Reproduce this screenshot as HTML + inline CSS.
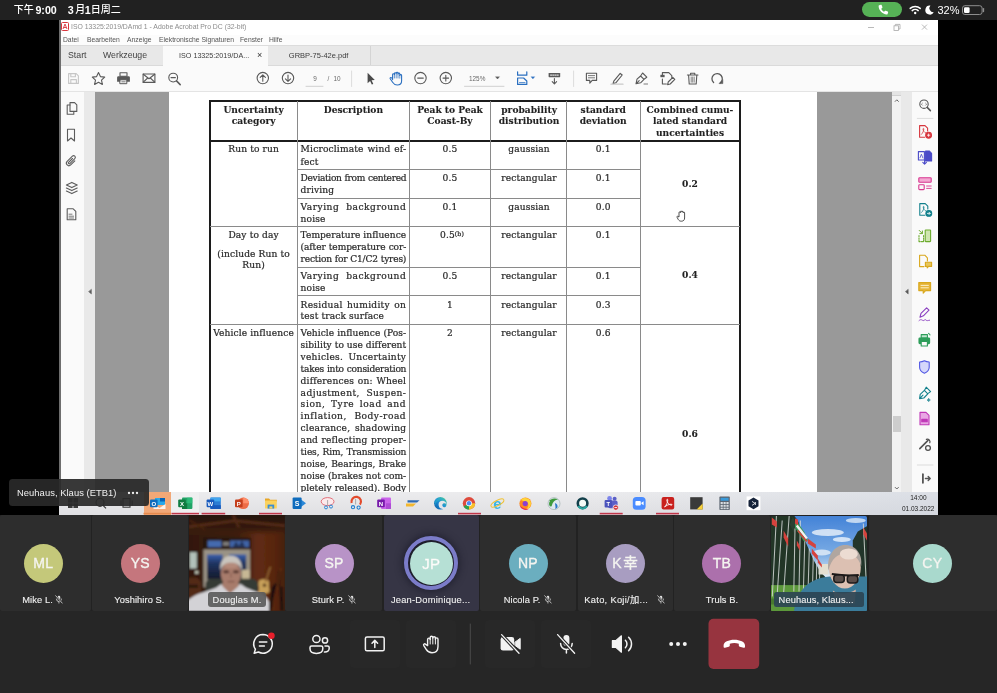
<!DOCTYPE html>
<html><head><meta charset="utf-8">
<style>
*{box-sizing:border-box;margin:0;padding:0}
html,body{width:997px;height:693px;overflow:hidden;background:#000}
body{position:relative;-webkit-font-smoothing:antialiased;font-family:"Liberation Sans","Noto Sans CJK SC",sans-serif;color:#fff}
.abs{position:absolute}
#status,#share,#bar,.gs{will-change:transform}
#status{left:0;top:0;width:997px;height:20px;background:#212121}
#status .t{position:absolute;top:3px;font-size:10px;line-height:14px;font-weight:500;color:#fff;white-space:nowrap}
#status .t b{font-weight:bold;font-size:10.700px}
#share{left:59px;top:20px;width:879px;height:495px;background:#fafafa;overflow:hidden;color:#444}
#share .abs{position:absolute}
#status,#share,#bar,.gs{will-change:transform}

.tt{font-size:6.86px;line-height:10px;color:#8c8c8c;white-space:nowrap}
.mn{top:15px;font-size:6.75px;line-height:10px;color:#555;white-space:nowrap}
.tb{top:29px;font-size:8.75px;line-height:12px;color:#444;white-space:nowrap}
.tb2{top:30px;font-size:7.5px;line-height:11px;color:#3c3c3c;white-space:nowrap}

.pg{top:52.500px;font-size:6.400px;line-height:11px;color:#6a6a6a;white-space:nowrap}
.dl{font-family:"DejaVu Serif","Liberation Serif",serif;font-size:9.1px;line-height:12px;height:12px;color:#2b2b2b;white-space:nowrap;overflow:visible;letter-spacing:.12px;-webkit-text-stroke:.22px #2b2b2b}
.dl.b{font-weight:bold;color:#222;letter-spacing:0;-webkit-text-stroke:.1px #222}
#strip{will-change:transform;left:0;top:515px;width:997px;height:96px;background:#222}
.tile{position:absolute;top:0;height:96px;background:#2d2d2d;border-radius:2px}
.av{position:absolute;top:28.500px;width:39px;height:39px;border-radius:50%;text-align:center;font-size:14px;line-height:39px;color:#f4f4f0;font-weight:normal;letter-spacing:.2px;-webkit-text-stroke:.35px #f4f4f0}
.nm{position:absolute;top:78px;height:14px;font-size:9.300px;line-height:14px;color:#f0f0f0;white-space:nowrap;letter-spacing:.08px;-webkit-text-stroke:.12px #f0f0f0}
#bar{left:0;top:611px;width:997px;height:82px;background:#262626}
</style></head><body>
<div id="status" class="abs">
<span class="t" style="left:13.800px">下午</span><span class="t" style="left:35.400px"><b>9:00</b></span>
<span class="t" style="left:67.800px"><b>3</b></span><span class="t" style="left:75.200px">月</span><span class="t" style="left:84.700px"><b>1</b></span><span class="t" style="left:90.800px">日周二</span>
<div style="position:absolute;left:862px;top:2.200px;width:40.400px;height:14.800px;border-radius:7.400px;background:#56b256"></div>
<svg style="position:absolute;left:860px;top:0" width="137" height="20" viewBox="860 0 137 20">
<path d="M879.200 5.200l1.600-.5c.4-.1.700.1.800.4l.8 2c.1.300 0 .6-.2.800l-1 .8c.6 1.300 1.600 2.400 2.800 3.100l.9-.9c.2-.2.500-.3.800-.2l2 .9c.3.100.5.500.4.800l-.5 1.500c-.1.400-.5.600-.9.600-4.400-.300-7.900-3.900-8.100-8.400 0-.400.200-.800.600-.900z" fill="#fff"/>
<g fill="none" stroke="#fff" stroke-width="1.500" stroke-linecap="round"><path d="M910.200 8.400a7.300 7.300 0 0 1 10 0M912.200 10.600a4.400 4.400 0 0 1 6 0"/></g><circle cx="915.200" cy="13" r="1.200" fill="#fff"/>
<path d="M930.400 5.600a4.500 4.500 0 1 0 3.400 6.600 4 4 0 0 1-3.400-6.600z" fill="#fff"/>
<rect x="962.500" y="5.700" width="19.600" height="8.800" rx="2.400" fill="none" stroke="#8e8e8e" stroke-width="1"/><rect x="964" y="7.200" width="5.600" height="5.800" rx="1.200" fill="#fff"/><path d="M983.500 8.600v3" stroke="#8e8e8e" stroke-width="1.300" stroke-linecap="round"/>
</svg>
<span class="t" style="left:937.500px;font-weight:normal;font-size:11px">32%</span>

</div>
<div id="share" class="abs">

<!-- Acrobat title/menu/tabs/toolbar -->
<div class="abs" style="left:0;top:0;width:879px;height:15px;background:#fff"></div>
<svg class="abs" style="left:2px;top:2px" width="8" height="9" viewBox="0 0 8 9"><rect x="0.5" y="0.5" width="7" height="8" rx="1" fill="#fff" stroke="#d9363e" stroke-width="1"/><path d="M2 7 L4 2 L6 7 M2.6 5.5 L5.4 5.5" stroke="#d9363e" stroke-width="0.9" fill="none"/></svg>
<span class="abs tt" style="left:12px;top:2px">ISO 13325:2019/DAmd 1 - Adobe Acrobat Pro DC (32-bit)</span>
<div class="abs" style="left:0;top:15px;width:879px;height:11px;background:#fcfcfc"></div>
<span class="abs mn" style="left:4px">Datei</span>
<span class="abs mn" style="left:28px">Bearbeiten</span>
<span class="abs mn" style="left:68px">Anzeige</span>
<span class="abs mn" style="left:100px">Elektronische Signaturen</span>
<span class="abs mn" style="left:181px">Fenster</span>
<span class="abs mn" style="left:210px">Hilfe</span>
<div class="abs" style="left:0;top:25px;width:879px;height:21px;background:#e8e8e8;border-top:1px solid #dcdcdc;border-bottom:1px solid #dadada"></div>
<div class="abs" style="left:104px;top:26px;width:105px;height:20px;background:#fafafa"></div>
<div class="abs" style="left:311px;top:26px;width:1px;height:19px;background:#d4d4d4"></div>
<span class="abs tb" style="left:9px">Start</span>
<span class="abs tb" style="left:44px">Werkzeuge</span>
<span class="abs tb2" style="left:120px;font-size:7.2px">ISO 13325:2019/DA...</span>
<span class="abs tb2" style="left:198px;font-size:9px;color:#333">×</span>
<span class="abs tb2" style="left:229.800px">GRBP-75-42e.pdf</span>
<div class="abs" style="left:0;top:46px;width:879px;height:26px;background:#fafafa;border-bottom:1px solid #e4e4e4"></div>

<!-- toolbar icons (page coords via viewBox) -->
<svg class="abs" style="left:0;top:46px" width="879" height="26" viewBox="59 66 879 26" fill="none" stroke="#595959" stroke-width="1.1" stroke-linecap="round" stroke-linejoin="round">
<!-- save (disabled) -->
<g stroke="#c6c6c6"><path d="M68.6 73.6h7.6l2.2 2.2v7.6h-9.8z"/><path d="M70.8 73.8v3h4.6v-3M70.8 83.2v-3.6h5.6v3.6"/></g>
<!-- star -->
<path d="M98.5 72.6l1.9 4 4.3.5-3.2 3 .9 4.3-3.9-2.2-3.9 2.2.9-4.3-3.2-3 4.3-.5z"/>
<!-- print -->
<rect x="120" y="72.800" width="7" height="3.400" fill="#fafafa" stroke="#595959" stroke-width="1.100"/><path d="M118.400 76.200h10.200a1.300 1.300 0 0 1 1.300 1.300v4.300h-12.800v-4.300a1.300 1.300 0 0 1 1.300-1.300z" fill="#595959" stroke="none"/><rect x="120.200" y="79.800" width="6.600" height="3.900" fill="#fafafa" stroke="#595959" stroke-width="1"/><path d="M121.800 81.800h3.400" stroke-width=".8"/>
<!-- mail -->
<rect x="143.1" y="74" width="11.8" height="8.4"/><path d="M143.3 74.2l5.7 4.6 5.7-4.6M143.3 82.2l4.4-4.2M154.7 82.2l-4.4-4.2"/>
<!-- zoom-out search -->
<circle cx="173.2" cy="77.6" r="4.4"/><path d="M176.5 80.9l3.7 3.7" stroke-width="1.5"/><path d="M171 77.6h4.4"/>
<!-- up / down -->
<circle cx="262.8" cy="78.1" r="5.7"/><path d="M262.8 81.2v-6.2M260.2 77.4l2.6-2.6 2.6 2.6"/>
<circle cx="288" cy="78.1" r="5.7"/><path d="M288 75v6.2M285.4 78.8l2.6 2.6 2.6-2.6"/>
<path d="M306 86.3h17M464.5 86.3h39.5" stroke="#d0d0d0" stroke-width="1"/>
<path d="M351.6 71v15.5M573.6 71v15.5" stroke="#dcdcdc" stroke-width="1"/>
<!-- arrow cursor -->
<path d="M367.6 72.8v10.4l2.5-2.3 1.7 3.7 1.5-.7-1.7-3.6 3.2-.2z" fill="#4a4a4a" stroke="none"/>
<!-- hand (blue) -->
<g stroke="#2a6fc0" stroke-width="1.1"><path d="M392.6 79.6v-5a.9.9 0 0 1 1.8 0v-1a.9.9 0 0 1 1.8 0v-.4a.9.9 0 0 1 1.8 0v.8a.9.9 0 0 1 1.8 0v1.400a.9.9 0 0 1 1.800 0v5.600c0 2.600-1.600 4-4.400 4-2.400 0-3.400-1-4.600-2.800l-2.400-3.400c-.5-.9.600-1.700 1.400-1l1 1z"/><path d="M394.400 74.500v3.500M396.200 73.600v4.400M398 73.800v4.200M399.800 75.200v3" stroke-width=".7"/></g>
<!-- minus / plus -->
<circle cx="420.500" cy="78.100" r="5.700"/><path d="M417.700 78.100h5.600"/>
<circle cx="445.800" cy="78.100" r="5.700"/><path d="M443 78.100h5.600M445.800 75.300v5.600"/>
<path d="M495.800 77l1.700 2 1.700-2z" fill="#595959" stroke="#595959" stroke-width=".5"/>
<!-- blue fit icon -->
<g stroke="#2a6fc0" stroke-width="1.200"><path d="M517.600 71.800v3.400h9.200v-3.400"/><path d="M517.600 84.400v-6.400h6l3.200 3v3.400z" /><path d="M519.500 82.600h5.500" stroke-width=".8"/></g>
<path d="M531.400 77l1.500 1.800 1.500-1.800z" fill="#2a6fc0" stroke="#2a6fc0" stroke-width=".5"/>
<!-- keyboard download -->
<rect x="548.600" y="73" width="11.600" height="4.200" rx=".6" fill="#595959" stroke="none"/><path d="M550.500 75.100h8" stroke="#fafafa" stroke-width="1" stroke-dasharray="1.200 1"/><path d="M554.400 78.600v5M552.200 81.600l2.200 2.400 2.200-2.400"/>
<!-- comment -->
<path d="M586.400 73.200h10.200v7.200h-4.400l-2.400 2.800v-2.800h-3.400z"/><path d="M588.400 75.600h6.200M588.400 77.800h6.200" stroke-width=".8"/>
<!-- highlighter -->
<path d="M613.800 81.200l6.400-7.800 2 1.600-6.400 7.800-2.800.8z"/><path d="M611 84.200h12" stroke="#c9c9c9" stroke-width="1.300"/>
<!-- sign pen -->
<path d="M636 83.800l1-4.600 3.600-3.200 3.400 3.400-3.400 3.400zM640.600 76l2-3 4.200 4.200-2.800 2M636.200 83.600l3-3"/><path d="M644 84h3.600" stroke-width=".8"/>
<!-- tag/edit pdf -->
<path d="M662.400 76v-3.400h6.400l3 3v2M662.400 79v5h4"/><rect x="660.400" y="74.800" width="4.200" height="2.400" fill="#595959" stroke="none"/><path d="M667.600 84.600l.6-2.600 4.600-4.600 2 2-4.600 4.600z"/>
<!-- trash -->
<path d="M687.400 75h10.600M690.600 74.800v-1.600h4.200v1.600M688.600 75.200l.6 8.800h7l.6-8.800"/><path d="M691.200 77v5.200M692.700 77v5.200M694.200 77v5.200" stroke-width=".7"/>
<!-- rotate -->
<path d="M713.600 82.600a5.200 5.200 0 1 1 6.600.4" stroke-width="1.300"/><path d="M722.800 80.200v3.400h-3.400z" fill="#595959" stroke-width=".6"/>
</svg>
<span class="abs pg" style="left:254.200px">9</span>
<span class="abs pg" style="left:268.600px">/</span><span class="abs pg" style="left:274.400px">10</span>
<span class="abs pg" style="left:410px">125%</span>
<!-- window controls -->
<svg class="abs" style="left:800px;top:0" width="79" height="15" viewBox="859 20 79 15" fill="none" stroke="#a8a8a8" stroke-width=".8"><path d="M868 27.500h6"/><rect x="894" y="25.800" width="4.600" height="4.600"/><path d="M895.400 25.600v-1.200h4.600v4.600h-1.200"/><path d="M922 24.600l5 5M927 24.600l-5 5"/></svg>

<div class="abs" style="left:36px;top:72px;width:797px;height:400px;background:#999"></div>
<div class="abs" style="left:110px;top:72px;width:648px;height:400px;background:#fff"></div>
<div class="abs" style="left:149.5px;top:80.0px;width:532.5px;height:2px;background:#1c1c1c"></div>
<div class="abs" style="left:149.5px;top:120.2px;width:532.5px;height:2px;background:#1c1c1c"></div>
<div class="abs" style="left:149.5px;top:80.0px;width:2px;height:392.0px;background:#1c1c1c"></div>
<div class="abs" style="left:680.2px;top:80.0px;width:2px;height:392.0px;background:#1c1c1c"></div>
<div class="abs" style="left:238.3px;top:81.0px;width:1px;height:391.0px;background:#8a8a8a"></div>
<div class="abs" style="left:349.6px;top:81.0px;width:1px;height:391.0px;background:#8a8a8a"></div>
<div class="abs" style="left:431.4px;top:81.0px;width:1px;height:391.0px;background:#8a8a8a"></div>
<div class="abs" style="left:507.1px;top:81.0px;width:1px;height:391.0px;background:#8a8a8a"></div>
<div class="abs" style="left:580.8px;top:81.0px;width:1px;height:391.0px;background:#8a8a8a"></div>
<div class="abs" style="left:238.3px;top:149.2px;width:342.7px;height:1px;background:#8a8a8a"></div>
<div class="abs" style="left:238.3px;top:177.8px;width:342.7px;height:1px;background:#8a8a8a"></div>
<div class="abs" style="left:238.3px;top:247.0px;width:342.7px;height:1px;background:#8a8a8a"></div>
<div class="abs" style="left:238.3px;top:275.2px;width:342.7px;height:1px;background:#8a8a8a"></div>
<div class="abs" style="left:151.0px;top:206.2px;width:530.0px;height:1px;background:#8a8a8a"></div>
<div class="abs" style="left:151.0px;top:303.8px;width:530.0px;height:1px;background:#8a8a8a"></div>
<div class="abs dl b" style="top:83.5px;left:94.6px;width:200px;text-align:center;">Uncertainty</div>
<div class="abs dl b" style="top:95.2px;left:94.6px;width:200px;text-align:center;">category</div>
<div class="abs dl b" style="top:83.5px;left:194.4px;width:200px;text-align:center;">Description</div>
<div class="abs dl b" style="top:83.5px;left:291.0px;width:200px;text-align:center;">Peak to Peak</div>
<div class="abs dl b" style="top:95.2px;left:291.0px;width:200px;text-align:center;">Coast-By</div>
<div class="abs dl b" style="top:83.5px;left:370.1px;width:200px;text-align:center;">probability</div>
<div class="abs dl b" style="top:95.2px;left:370.1px;width:200px;text-align:center;">distribution</div>
<div class="abs dl b" style="top:83.5px;left:444.2px;width:200px;text-align:center;">standard</div>
<div class="abs dl b" style="top:95.2px;left:444.2px;width:200px;text-align:center;">deviation</div>
<div class="abs dl b" style="top:83.5px;left:531.0px;width:200px;text-align:center;">Combined cumu-</div>
<div class="abs dl b" style="top:95.2px;left:531.0px;width:200px;text-align:center;">lated standard</div>
<div class="abs dl b" style="top:107.0px;left:531.0px;width:200px;text-align:center;">uncertainties</div>
<div class="abs dl" style="top:123.4px;left:94.6px;width:200px;text-align:center;">Run to run</div>
<div class="abs dl" style="top:209.4px;left:94.6px;width:200px;text-align:center;">Day to day</div>
<div class="abs dl" style="top:227.8px;left:94.6px;width:200px;text-align:center;">(include Run to</div>
<div class="abs dl" style="top:239.3px;left:94.6px;width:200px;text-align:center;">Run)</div>
<div class="abs dl" style="top:306.8px;left:94.6px;width:200px;text-align:center;">Vehicle influence</div>
<div class="abs dl" style="top:123.4px;left:241.6px;width:105.6px;text-align:justify;text-align-last:justify;letter-spacing:0.161px;">Microclimate wind ef-</div>
<div class="abs dl" style="top:135.5px;left:241.6px;">fect</div>
<div class="abs dl" style="top:152.2px;left:241.6px;width:105.6px;text-align:justify;text-align-last:justify;letter-spacing:-0.337px;">Deviation from centered</div>
<div class="abs dl" style="top:164.0px;left:241.6px;">driving</div>
<div class="abs dl" style="top:180.8px;left:241.6px;width:105.6px;text-align:justify;text-align-last:justify;letter-spacing:0.485px;">Varying background</div>
<div class="abs dl" style="top:192.8px;left:241.6px;">noise</div>
<div class="abs dl" style="top:209.4px;left:241.6px;width:105.6px;text-align:justify;text-align-last:justify;letter-spacing:0.024px;">Temperature influence</div>
<div class="abs dl" style="top:221.4px;left:241.6px;width:105.6px;text-align:justify;text-align-last:justify;letter-spacing:-0.111px;">(after temperature cor-</div>
<div class="abs dl" style="top:233.2px;left:241.6px;width:105.6px;text-align:justify;text-align-last:justify;letter-spacing:-0.211px;">rection for C1/C2 tyres)</div>
<div class="abs dl" style="top:249.8px;left:241.6px;width:105.6px;text-align:justify;text-align-last:justify;letter-spacing:0.485px;">Varying background</div>
<div class="abs dl" style="top:261.6px;left:241.6px;">noise</div>
<div class="abs dl" style="top:278.6px;left:241.6px;width:105.6px;text-align:justify;text-align-last:justify;letter-spacing:0.276px;">Residual humidity on</div>
<div class="abs dl" style="top:290.2px;left:241.6px;">test track surface</div>
<div class="abs dl" style="top:306.8px;left:241.6px;width:105.6px;text-align:justify;text-align-last:justify;letter-spacing:0.050px;">Vehicle influence (Pos-</div>
<div class="abs dl" style="top:318.8px;left:241.6px;width:105.6px;text-align:justify;text-align-last:justify;letter-spacing:0.033px;">sibility to use different</div>
<div class="abs dl" style="top:330.7px;left:241.6px;width:105.6px;text-align:justify;text-align-last:justify;letter-spacing:0.250px;">vehicles. Uncertainty</div>
<div class="abs dl" style="top:342.6px;left:241.6px;width:105.6px;text-align:justify;text-align-last:justify;letter-spacing:-0.266px;">takes into consideration</div>
<div class="abs dl" style="top:354.6px;left:241.6px;width:105.6px;text-align:justify;text-align-last:justify;letter-spacing:0.175px;">differences on: Wheel</div>
<div class="abs dl" style="top:366.5px;left:241.6px;width:105.6px;text-align:justify;text-align-last:justify;letter-spacing:0.411px;">adjustment, Suspen-</div>
<div class="abs dl" style="top:378.4px;left:241.6px;width:105.6px;text-align:justify;text-align-last:justify;letter-spacing:0.643px;">sion, Tyre load and</div>
<div class="abs dl" style="top:390.4px;left:241.6px;width:105.6px;text-align:justify;text-align-last:justify;letter-spacing:0.504px;">inflation, Body-road</div>
<div class="abs dl" style="top:402.3px;left:241.6px;width:105.6px;text-align:justify;text-align-last:justify;letter-spacing:0.185px;">clearance, shadowing</div>
<div class="abs dl" style="top:414.2px;left:241.6px;width:105.6px;text-align:justify;text-align-last:justify;letter-spacing:0.125px;">and reflecting proper-</div>
<div class="abs dl" style="top:426.1px;left:241.6px;width:105.6px;text-align:justify;text-align-last:justify;letter-spacing:-0.140px;">ties, Rim, Transmission</div>
<div class="abs dl" style="top:438.1px;left:241.6px;width:105.6px;text-align:justify;text-align-last:justify;letter-spacing:0.042px;">noise, Bearings, Brake</div>
<div class="abs dl" style="top:450.0px;left:241.6px;width:105.6px;text-align:justify;text-align-last:justify;letter-spacing:0.022px;">noise (brakes not com-</div>
<div class="abs dl" style="top:461.9px;left:241.6px;width:105.6px;text-align:justify;text-align-last:justify;letter-spacing:-0.045px;">pletely released). Body</div>
<div class="abs dl" style="top:123.4px;left:291.0px;width:200px;text-align:center;">0.5</div>
<div class="abs dl" style="top:152.2px;left:291.0px;width:200px;text-align:center;">0.5</div>
<div class="abs dl" style="top:180.8px;left:291.0px;width:200px;text-align:center;">0.1</div>
<div class="abs dl" style="top:249.8px;left:291.0px;width:200px;text-align:center;">0.5</div>
<div class="abs dl" style="top:278.6px;left:291.0px;width:200px;text-align:center;">1</div>
<div class="abs dl" style="top:306.8px;left:291.0px;width:200px;text-align:center;">2</div>
<div class="abs dl" style="top:209.4px;left:293.0px;width:200px;text-align:center;">0.5<span style="font-size:6.2px;position:relative;top:-2.6px">(b)</span></div>
<div class="abs dl" style="top:123.4px;left:370.0px;width:200px;text-align:center;">gaussian</div>
<div class="abs dl" style="top:152.2px;left:370.0px;width:200px;text-align:center;">rectangular</div>
<div class="abs dl" style="top:180.8px;left:370.0px;width:200px;text-align:center;">gaussian</div>
<div class="abs dl" style="top:209.4px;left:370.0px;width:200px;text-align:center;">rectangular</div>
<div class="abs dl" style="top:249.8px;left:370.0px;width:200px;text-align:center;">rectangular</div>
<div class="abs dl" style="top:278.6px;left:370.0px;width:200px;text-align:center;">rectangular</div>
<div class="abs dl" style="top:306.8px;left:370.0px;width:200px;text-align:center;">rectangular</div>
<div class="abs dl" style="top:123.4px;left:444.2px;width:200px;text-align:center;">0.1</div>
<div class="abs dl" style="top:152.2px;left:444.2px;width:200px;text-align:center;">0.1</div>
<div class="abs dl" style="top:180.8px;left:444.2px;width:200px;text-align:center;">0.0</div>
<div class="abs dl" style="top:209.4px;left:444.2px;width:200px;text-align:center;">0.1</div>
<div class="abs dl" style="top:249.8px;left:444.2px;width:200px;text-align:center;">0.1</div>
<div class="abs dl" style="top:278.6px;left:444.2px;width:200px;text-align:center;">0.3</div>
<div class="abs dl" style="top:306.8px;left:444.2px;width:200px;text-align:center;">0.6</div>
<div class="abs dl b" style="top:158.4px;left:531.0px;width:200px;text-align:center;">0.2</div>
<div class="abs dl b" style="top:249.1px;left:531.0px;width:200px;text-align:center;">0.4</div>
<div class="abs dl b" style="top:408.1px;left:531.0px;width:200px;text-align:center;">0.6</div>
<!-- left nav -->
<div class="abs" style="left:0;top:72px;width:25.3px;height:400px;background:#fafafa"></div>
<div class="abs" style="left:25.3px;top:72px;width:10.7px;height:400px;background:#e9e9e9"></div>
<div class="abs" style="left:0;top:0;width:1.500px;height:495px;background:#6e6e6e"></div>
<svg class="abs" style="left:0;top:72px" width="36" height="400" viewBox="59 92 36 400" fill="none" stroke="#5c5c5c" stroke-width="1.1" stroke-linejoin="round" stroke-linecap="round">
<path d="M70 102.600h4.600l2.200 2.200v6.600h-6.800z"/><path d="M70 105h-2.800v9.200h6.600v-2.600"/>
<path d="M67.500 129.200h7v11.800l-3.500-3-3.500 3z"/>
<g transform="translate(71.200 160.900) rotate(45)"><path d="M2.500-2.600v5.800a2.500 2.500 0 0 1-5 0v-7.400a1.700 1.700 0 0 1 3.400 0v7a.85.85 0 0 1-1.700 0v-5.400"/></g>
<path d="M71.800 182.400l5.400 2.600-5.400 2.600-5.400-2.600z"/><path d="M66.400 188l5.400 2.600 5.400-2.600M66.400 191l5.400 2.600 5.400-2.600"/>
<path d="M67.200 208.800h6l2.600 2.600v8.400h-8.600z"/><path d="M69 214.200h3M69 216.200h4.600M69 218h4.600" stroke-width=".8"/>
<path d="M91.400 289.600v4.400l-2.600-2.200z" fill="#5c5c5c" stroke-width=".5"/>
</svg>
<!-- right scrollbar + tools -->
<div class="abs" style="left:833px;top:72px;width:9.400px;height:400px;background:#f2f2f2"></div>
<div class="abs" style="left:833px;top:72px;width:9.400px;height:4px;background:#e4e4e4;border-bottom:1px solid #d0d0d0"></div>
<div class="abs" style="left:833.500px;top:396px;width:8.400px;height:16px;background:#cdcdcd"></div>
<div class="abs" style="left:842.400px;top:72px;width:10.600px;height:400px;background:#e9e9e9"></div>
<div class="abs" style="left:853px;top:72px;width:26px;height:400px;background:#fafafa"></div>
<svg class="abs" style="left:833px;top:72px" width="46" height="400" viewBox="892 92 46 400" fill="none" stroke-width="1.100" stroke-linejoin="round" stroke-linecap="round">
<g stroke="#555"><path d="M895.200 101.400l1.600-1.600 1.600 1.600M895.200 487.400l1.600 1.600 1.600-1.600" stroke-width=".9"/>
<path d="M908.200 289.600v4.400l-2.600-2.200z" fill="#555" stroke-width=".5"/>
<circle cx="924" cy="104.200" r="4.200"/><path d="M927.200 107.400l3.200 3.200" stroke-width="1.500"/><path d="M922.400 103.200l-1 1 1 1M925.600 103.200l1 1-1 1" stroke-width=".7"/>
</g>
<path d="M917.300 118.400h15.700M917.300 465h15.700" stroke="#dcdcdc" stroke-width="1"/>
<!-- red create pdf -->
<g stroke="#d7373f"><path d="M927.600 131v-2.800l-2.600-2.600h-5.400v11.600h5"/><path d="M921.400 134.400c1.600-1.600 2.400-4 2.400-5.400 0-.8-.8-.8-.8 0 0 1.600 1.600 3.800 3 4.200" stroke-width=".8"/><circle cx="928.600" cy="135.200" r="2.900" fill="#d7373f"/><path d="M927.400 135.200h2.400M928.600 134v2.400" stroke="#fff" stroke-width=".8"/></g>
<!-- blue export -->
<g stroke="#4b4bc8" fill="#4b4bc8"><path d="M918.400 151.600h6v8.400h-6z" fill="none"/><path d="M920 157.800l1.400-3.600 1.400 3.600" stroke-width=".8" fill="none"/><path d="M925.600 151h3.600l2.400 2.400v7.600h-6z"/><path d="M924.600 160.400v3.400M922.800 162.400l1.800 1.800 1.800-1.800" fill="none"/></g>
<!-- pink organize -->
<g stroke="#d83790"><rect x="918.800" y="177.800" width="12.400" height="4.400" rx=".8" fill="#f3a8d2"/><rect x="918.800" y="184.800" width="5.400" height="4.800" rx=".8"/><path d="M926.600 186h4.600M926.600 188.400h4.600" stroke-width=".9"/></g>
<!-- teal export pdf -->
<g stroke="#12808c"><path d="M927.800 209v-2.800l-2.600-2.600h-5.400v11.600h5"/><path d="M921.600 212.400c1.600-1.600 2.400-4 2.400-5.400 0-.8-.8-.8-.8 0 0 1.600 1.600 3.800 3 4.200" stroke-width=".8"/><circle cx="928.800" cy="213.400" r="2.900" fill="#12808c"/><path d="M927.400 213.400h2.600M929 212.200l1.200 1.200-1.200 1.200" stroke="#fff" stroke-width=".8"/></g>
<!-- green compress -->
<g stroke="#6cab2e"><rect x="925.200" y="230" width="5.400" height="11.600" rx=".6" fill="#cfe6b0"/><path d="M919 241.600h4.600M919 241.600v-6.800M923.600 241.600v-6.800" stroke-dasharray="1.200 1.200"/><path d="M919.200 230.400l3 3M922.400 231v2.600h-2.600" stroke-width="1"/></g>
<!-- yellow send for comments -->
<g stroke="#d9a81e"><path d="M924 266.600h-4.400v-11.400h5.200l2.600 2.600v3.200"/><path d="M925.400 262.200h6.200v4.200h-3l-1.400 1.400v-1.400h-1.800z" fill="#e8c65a"/></g>
<!-- yellow comment -->
<path d="M918.800 282.600h11.800v8h-5l-2.400 2.600v-2.600h-4.400z" fill="#e6b53a" stroke="#d9a81e"/><path d="M921 285.400h7.400M921 287.800h7.400" stroke="#fff6d8" stroke-width=".9"/>
<!-- purple sign -->
<g stroke="#8a3fc0"><path d="M920 317.200l1-3.800 5.600-5.600 2.400 2.400-5.600 5.600z"/><path d="M919 320.600c2-2 3-.4 4 0s2-1.800 3-.6 2 .4 3.600.2" stroke-width=".9"/></g>
<!-- green print -->
<g stroke="#2d9d5a"><rect x="921.200" y="334.600" width="6.200" height="3.400" fill="#bfe6cf"/><rect x="919" y="338" width="10.600" height="5.600" rx=".8" fill="#2d9d5a"/><rect x="921.200" y="341.400" width="6.200" height="4.600" fill="#fafafa"/><path d="M928.600 333.400l1.400 1.400" stroke-dasharray=".8 .8"/></g>
<!-- blue shield -->
<path d="M924.400 360.800c1.800 1 3.400 1.200 4.800 1.200v5.200c0 3-2.400 5-4.800 6-2.400-1-4.800-3-4.800-6v-5.200c1.400 0 3-.2 4.800-1.200z" stroke="#5258e4" fill="#d5d7fb"/>
<!-- teal fill & sign -->
<g stroke="#12808c"><path d="M919.600 398.600l.6-4.200 4.200-4 3.400 3.400-4 4.200zM924.400 390.400l1.800-3.200 4.400 4.400-2.800 2M919.800 398.400l3.200-3.200"/><path d="M928.600 398.800a1.200 1.200 0 1 0 .1 0v2" stroke-width=".9"/></g>
<!-- magenta redact -->
<g stroke="#c038b8"><path d="M920 412.400h6l3 3v9.400h-9z" fill="#e9a6e4"/><rect x="921.800" y="419.400" width="5.400" height="2.400" fill="#c038b8"/></g>
<!-- wrench -->
<g stroke="#505050" stroke-width="1.500"><path d="M919.800 448.600l8.200-8.200"/><path d="M926.400 439.400a2.600 2.600 0 0 1 3.400 3.400" stroke-width="1.200"/><circle cx="928" cy="448" r="2.400" stroke-width="1.300"/></g>
<!-- expand -->
<g stroke="#555"><path d="M922.900 474.200v8.600" stroke-width="1.800"/><path d="M925.400 478.500h4.600M928.200 476.500l2 2-2 2" stroke-width="1.400"/></g>
</svg>
<!-- hand cursor on page -->
<svg class="abs" style="left:617px;top:189.500px" width="11" height="12" viewBox="0 0 11 12" fill="#fff" stroke="#222" stroke-width=".8" stroke-linejoin="round"><path d="M3 7V2.600a.7.700 0 0 1 1.400 0V1.800a.7.700 0 0 1 1.400 0v.3a.7.700 0 0 1 1.400 0v.7a.7.700 0 0 1 1.400 0V8c0 2-1.200 3.200-3.200 3.200-1.600 0-2.400-.6-3.200-1.800L1 7.200c-.4-.7.500-1.300 1-.7z"/></svg>

<!-- windows taskbar -->
<div class="abs" style="left:0;top:472px;width:879px;height:23px;background:linear-gradient(90deg,rgba(0,0,0,0) 60%,rgba(190,200,215,.35)),linear-gradient(#ececee,#e0e0e3)"></div>
<div class="abs" style="left:84.500px;top:472px;width:27.800px;height:22.500px;background:#f2a877"></div>
<div class="abs" style="left:112.300px;top:472px;width:28px;height:22.500px;background:#efeff0"></div>
<svg class="abs" style="left:0;top:472px" width="879" height="23" viewBox="59 492 879 23" font-family="Liberation Sans, sans-serif" font-weight="bold" font-size="6.500" text-anchor="middle">
<g fill="#c0364a"><rect x="143.500" y="512.800" width="27.800" height="1.600" fill="#e58a4e"/><rect x="171.600" y="512.800" width="27.400" height="1.600"/><rect x="201.600" y="512.800" width="23.600" height="1.600"/><rect x="259" y="512.800" width="23" height="1.600"/><rect x="458" y="512.800" width="23" height="1.600"/><rect x="599.700" y="512.800" width="23" height="1.600"/><rect x="656" y="512.800" width="23" height="1.600"/></g>
<!-- start/search/taskview (under tooltip) -->
<g fill="#3a3a3a"><rect x="68" y="498" width="4.600" height="4.600"/><rect x="73.400" y="498" width="4.600" height="4.600"/><rect x="68" y="503.400" width="4.600" height="4.600"/><rect x="73.400" y="503.400" width="4.600" height="4.600"/></g>
<circle cx="100" cy="502.400" r="4" fill="none" stroke="#3a3a3a" stroke-width="1.100"/><path d="M103 505.400l3 3" stroke="#3a3a3a" stroke-width="1.300"/>
<rect x="123" y="498.600" width="7" height="8.600" fill="none" stroke="#3a3a3a" stroke-width="1.100"/><path d="M121 500.500v5M132.200 500.500v5" stroke="#3a3a3a" stroke-width="1.100"/>
<!-- outlook -->
<rect x="155" y="498" width="10" height="7" fill="#28a8ea"/><rect x="160" y="498" width="5" height="3.500" fill="#0364b8"/><path d="M153.500 504l6 4 6-4v5h-12z" fill="#fff" opacity=".85"/><rect x="150" y="499.600" width="7.600" height="7.600" rx="1" fill="#0f6cbd"/><text x="153.800" y="505.800" fill="#fff" font-size="6">O</text>
<!-- excel -->
<rect x="182" y="497.600" width="10.400" height="11.400" rx="1" fill="#21a366"/><rect x="187.200" y="497.600" width="5.200" height="5.700" fill="#33c481" opacity=".7"/><rect x="182" y="503.300" width="5.200" height="5.700" fill="#107c41"/><rect x="178.200" y="499.600" width="7.600" height="7.600" rx="1" fill="#107c41"/><text x="182" y="505.800" fill="#fff" font-size="6">X</text>
<!-- word -->
<rect x="210.400" y="497.600" width="10.400" height="11.400" rx="1" fill="#2b7cd3"/><rect x="210.400" y="497.600" width="10.400" height="3.800" fill="#41a5ee"/><rect x="210.400" y="505.200" width="10.400" height="3.800" fill="#185abd"/><rect x="206.600" y="499.600" width="7.600" height="7.600" rx="1" fill="#185abd"/><text x="210.400" y="505.800" fill="#fff" font-size="6">W</text>
<!-- powerpoint -->
<circle cx="243.200" cy="503.300" r="5.800" fill="#ed6c47"/><path d="M243.200 497.500a5.800 5.800 0 0 1 5.800 5.800h-5.800z" fill="#ff8f6b"/><rect x="235" y="499.600" width="7.600" height="7.600" rx="1" fill="#c43e1c"/><text x="238.800" y="505.800" fill="#fff" font-size="6">P</text>
<!-- explorer -->
<path d="M265 498.400h4l1.200 1.400h6.600v2h-11.800z" fill="#e8a627"/><rect x="265" y="500.600" width="11.800" height="8" rx=".6" fill="#fbd25e"/><rect x="267.600" y="504.600" width="6.600" height="4" fill="#3b8ed6"/><rect x="269.400" y="506.400" width="3" height="2.200" fill="#fbd25e"/>
<!-- sharepoint -->
<path d="M299 498l7 5.300-7 5.300z" fill="#2b88d8"/><rect x="292.600" y="497.600" width="9" height="11.400" rx="1" fill="#0f6cbd"/><text x="297" y="506" fill="#fff" font-size="7">S</text>
<!-- snipping -->
<ellipse cx="327.600" cy="501.600" rx="6.400" ry="4" fill="#fbeaec" stroke="#e0626c" stroke-width=".9"/><path d="M327.600 500v5.500" stroke="#999" stroke-width=".8"/><circle cx="326" cy="507.400" r="1.500" fill="none" stroke="#2b88d8" stroke-width="1"/><circle cx="331" cy="506.600" r="1.500" fill="none" stroke="#2b88d8" stroke-width="1"/>
<!-- snip & sketch -->
<path d="M351.600 503a4.800 4.800 0 1 1 8.400 1.600" fill="none" stroke="#e24a2c" stroke-width="2.200"/><path d="M355.600 499v5.500" stroke="#999" stroke-width=".8"/><circle cx="353" cy="507.200" r="1.600" fill="none" stroke="#1f7fd0" stroke-width="1.100"/><circle cx="358.600" cy="507.600" r="1.600" fill="none" stroke="#1f7fd0" stroke-width="1.100"/>
<!-- onenote -->
<rect x="381" y="497.600" width="10" height="11.400" rx="1" fill="#ca64ea"/><rect x="386" y="503.300" width="5" height="5.700" fill="#ae4bd5"/><rect x="377.200" y="499.600" width="7.600" height="7.600" rx="1" fill="#7719aa"/><text x="381" y="505.800" fill="#fff" font-size="6">N</text>
<!-- yellow/blue -->
<path d="M407.500 500.200h12l-2.400 2.200h-9.600z" fill="#2f6bb5"/><path d="M406 503.400h10l-3 3.200h-7z" fill="#f2b730"/>
<!-- edge -->
<defs><linearGradient id="eg" x1="0" y1="1" x2="1" y2="0"><stop offset="0" stop-color="#0c59a4"/><stop offset=".5" stop-color="#1b8fd6"/><stop offset="1" stop-color="#5fd98c"/></linearGradient></defs>
<circle cx="440.400" cy="503.300" r="6.300" fill="url(#eg)"/><path d="M438.600 504.200c0-2.400 2.200-4 4.800-3.400 1.800.4 3 1.800 3.200 3.400-1-1-2.600-1.200-3.600-.4-1.200 1-.8 2.800.8 3.400 1.200.4 2.400 0 3.400-.8-1.200 2.200-4 3.200-6.200 2.200-1.600-.8-2.400-2.400-2.400-4.400z" fill="#e6e6e9"/><path d="M434.400 502c1-3 4-4.600 7-4 2.600.6 4.600 2.600 5.200 5.200-1.600-2.400-4.600-3.600-7.200-2.800-2.200.6-3.800 2.400-4 4.800-.6-1-.8-2-.8-3.200z" fill="#2bb3c8" opacity=".55"/>
<!-- chrome -->
<circle cx="469" cy="503.300" r="6.200" fill="#de4a3c"/><path d="M469 503.300l-5.400 3.100a6.200 6.200 0 0 0 5.400 3.100l3-5.200z" fill="#2ba24c"/><path d="M469 503.300h6.200a6.200 6.200 0 0 1-6.200 6.200z" fill="#f6c12b"/><circle cx="469" cy="503.300" r="2.900" fill="#fff"/><circle cx="469" cy="503.300" r="2.200" fill="#4a8af4"/>
<!-- IE -->
<text x="497.400" y="508.600" fill="#38b6ea" font-size="15" font-weight="bold">e</text><ellipse cx="497.400" cy="503" rx="7.200" ry="2.600" fill="none" stroke="#f1c232" stroke-width="1" transform="rotate(-28 497.400 503)"/>
<!-- firefox -->
<circle cx="525.400" cy="503.600" r="6" fill="#ff8a1f"/><path d="M521 500c2-3 8-2.500 9.600 1.500 1.400 4-1.400 7.500-5 7.800 3-1.500 3.600-5 1.600-6.800-1.600-1.400-4.200-1-6.200-2.500z" fill="#ffd43a"/><circle cx="525.200" cy="503.600" r="2.600" fill="#8a3fd0"/><path d="M519.600 505a6 6 0 0 0 9 4c-4 .4-7.400-1.600-9-4z" fill="#e8304f"/>
<!-- green/blue globe -->
<circle cx="554" cy="503.600" r="6" fill="#dfe8ee" stroke="#9aa" stroke-width=".6"/><path d="M549 501c2-2.600 6-3.200 9-1.600-3 .4-5.400 2.400-6 5.600-.4 2-1.600 2-2.600.6-.6-1.600-.4-3.400.6-4.600z" fill="#3f9a3c"/><path d="M555 503c2 .6 3 2.400 2.400 4.600l-2 1.600c.4-2-.2-4.200-.4-6.200z" fill="#2a78c8"/>
<!-- teal ring -->
<circle cx="582.600" cy="503.300" r="4.800" fill="#f4fbf6" stroke="#123f4a" stroke-width="2.600"/><path d="M578.400 506a4.800 4.800 0 0 0 8.400 0" fill="none" stroke="#2ca5a0" stroke-width="2.200"/>
<!-- teams -->
<circle cx="614.600" cy="498.800" r="2" fill="#5b5fc7"/><circle cx="609.600" cy="498.400" r="2.400" fill="#7b83eb"/><rect x="608" y="500.600" width="9.600" height="7.600" rx="2" fill="#5b5fc7"/><rect x="604.600" y="500" width="7.400" height="7.400" rx="1" fill="#4b53bc"/><text x="608.300" y="506" fill="#fff" font-size="5.800">T</text><circle cx="615.800" cy="507.600" r="2.700" fill="#d13438" stroke="#fff" stroke-width=".7"/><path d="M614.400 507.600h2.800" stroke="#fff" stroke-width=".9"/>
<!-- zoom -->
<rect x="632.800" y="497" width="12.800" height="12.800" rx="3.600" fill="#4a8cff"/><rect x="635.400" y="501" width="5.400" height="4.600" rx="1" fill="#fff"/><path d="M641.400 502.800l2.200-1.500v4l-2.200-1.500z" fill="#fff"/>
<!-- acrobat -->
<rect x="661.600" y="497" width="12.600" height="12.600" rx="2" fill="#c9211e"/><path d="M664.600 507c2-2 3.200-5.200 3.200-7 0-1-1-1-1 0 0 2.400 2.400 5 4.600 5.200 1 0 1-1-.4-1-2 0-5 1.400-6.400 2.800z" fill="none" stroke="#fff" stroke-width=".9"/>
<!-- sticky notes -->
<rect x="690.200" y="497.200" width="12.400" height="12.200" fill="#3a3a3a"/><path d="M696.600 509.400l6-6v6z" fill="#f7d038"/>
<!-- calculator -->
<rect x="719.400" y="496.600" width="10.400" height="13.400" rx=".8" fill="#5b6470"/><rect x="720.600" y="497.800" width="8" height="3" fill="#3a9ad9"/><g fill="#d8dde2"><rect x="720.600" y="502" width="2.200" height="2"/><rect x="723.500" y="502" width="2.200" height="2"/><rect x="726.400" y="502" width="2.200" height="2"/><rect x="720.600" y="504.800" width="2.200" height="2"/><rect x="723.500" y="504.800" width="2.200" height="2"/><rect x="726.400" y="504.800" width="2.200" height="2"/><rect x="720.600" y="507.600" width="2.200" height="1.600"/><rect x="723.500" y="507.600" width="2.200" height="1.600"/><rect x="726.400" y="507.600" width="2.200" height="1.600"/></g>
<!-- hex -->
<rect x="746.600" y="496.400" width="13.800" height="13.800" fill="#fff"/><path d="M753.500 497.600l5 2.900v5.800l-5 2.900-5-2.900v-5.800z" fill="#16233a"/><path d="M752 501.400l3 2-3 2M755.400 502v3" stroke="#fff" stroke-width=".8" fill="none"/>
<!-- clock -->
<g font-weight="normal" font-size="6.500" fill="#1c1c1c" text-anchor="middle"><text x="918.400" y="500.300">14:00</text><text x="918.200" y="511.400">01.03.2022</text></g>
</svg>

</div>
<div id="strip" class="abs">
<div class="tile" style="left:0px;width:90.6px"></div>
<div class="av" style="left:23.8px;background:#c4c87a">ML</div>
<div class="nm" style="left:22.3px">Mike L.</div>
<svg style="position:absolute;left:55.4px;top:80.200px" width="7.900" height="8.800" viewBox="0 0 9 10" fill="none" stroke="#ddd" stroke-width=".9" stroke-linecap="round"><rect x="3" y=".8" width="3" height="5" rx="1.500" fill="#ddd" stroke="none"/><path d="M1.600 4.600a2.900 2.900 0 0 0 5.800 0M4.500 7.600v1.600"/><path d="M.8.800l7.400 8.400" stroke="#2d2d2d" stroke-width="2"/><path d="M.8.800l7.400 8.400"/></svg>
<div class="tile" style="left:92.4px;width:95.8px"></div>
<div class="av" style="left:120.8px;background:#c5767d">YS</div>
<div class="nm" style="left:114.3px">Yoshihiro S.</div>
<div class="tile" style="left:285.2px;width:96.8px"></div>
<div class="av" style="left:314.5px;background:#b893c7">SP</div>
<div class="nm" style="left:311.8px">Sturk P.</div>
<svg style="position:absolute;left:348.2px;top:80.200px" width="7.900" height="8.800" viewBox="0 0 9 10" fill="none" stroke="#ddd" stroke-width=".9" stroke-linecap="round"><rect x="3" y=".8" width="3" height="5" rx="1.500" fill="#ddd" stroke="none"/><path d="M1.600 4.600a2.900 2.900 0 0 0 5.800 0M4.500 7.600v1.600"/><path d="M.8.800l7.400 8.400" stroke="#2d2d2d" stroke-width="2"/><path d="M.8.800l7.400 8.400"/></svg>
<div class="tile" style="left:480.4px;width:95.6px"></div>
<div class="av" style="left:508.5px;background:#6baebf">NP</div>
<div class="nm" style="left:503.7px">Nicola P.</div>
<svg style="position:absolute;left:544.4px;top:80.200px" width="7.900" height="8.800" viewBox="0 0 9 10" fill="none" stroke="#ddd" stroke-width=".9" stroke-linecap="round"><rect x="3" y=".8" width="3" height="5" rx="1.500" fill="#ddd" stroke="none"/><path d="M1.600 4.600a2.900 2.900 0 0 0 5.800 0M4.500 7.600v1.600"/><path d="M.8.800l7.400 8.400" stroke="#2d2d2d" stroke-width="2"/><path d="M.8.800l7.400 8.400"/></svg>
<div class="tile" style="left:577.6px;width:95.0px"></div>
<div class="av" style="left:605.7px;background:#a89dc1">K<span style="font-size:14.500px;margin-left:1.500px">幸</span></div>
<div class="nm" style="left:584.3px;letter-spacing:.3px">Kato, Koji/加...</div>
<svg style="position:absolute;left:657px;top:80.200px" width="7.900" height="8.800" viewBox="0 0 9 10" fill="none" stroke="#ddd" stroke-width=".9" stroke-linecap="round"><rect x="3" y=".8" width="3" height="5" rx="1.500" fill="#ddd" stroke="none"/><path d="M1.600 4.600a2.900 2.900 0 0 0 5.800 0M4.500 7.600v1.600"/><path d="M.8.800l7.400 8.400" stroke="#2d2d2d" stroke-width="2"/><path d="M.8.800l7.400 8.400"/></svg>
<div class="tile" style="left:674.4px;width:95.4px"></div>
<div class="av" style="left:702.4px;background:#ac70ac">TB</div>
<div class="nm" style="left:705.8px">Truls B.</div>
<div class="tile" style="left:868.6px;width:128.4px"></div>
<div class="av" style="left:912.8px;background:#a9d9cd">CY</div>
<div class="tile" style="left:383.700px;width:95.200px;background:#363545"></div>
<div style="position:absolute;left:404.300px;top:21px;width:54px;height:54px;border-radius:50%;background:#1e1e2c;border:4.200px solid #7b7cc9;box-shadow:0 0 7px 2px rgba(20,20,35,.55)"></div>
<div class="av" style="left:409.800px;top:26.500px;width:43px;height:43px;line-height:43px;font-size:15px;background:#b6e0d5;color:#fff">JP</div>
<div class="nm" style="left:390.900px;letter-spacing:.24px">Jean-Dominique...</div>
<!-- Douglas M. video tile -->
<svg style="position:absolute;left:189px;top:.200px" width="95.800" height="95.800" viewBox="189 515.200 95.800 95.800">
<defs><linearGradient id="wd" x1="0" x2="1"><stop offset="0" stop-color="#361a0f"/><stop offset=".5" stop-color="#40200f"/><stop offset=".7" stop-color="#6a3014"/><stop offset=".88" stop-color="#5e2810"/><stop offset="1" stop-color="#42200e"/></linearGradient>
<linearGradient id="cl" x1="0" y1="0" x2="0" y2="1"><stop offset="0" stop-color="#241109"/><stop offset=".7" stop-color="#3a1c0f"/><stop offset="1" stop-color="#4a2412" stop-opacity="0"/></linearGradient>
<linearGradient id="gl" x1="0" y1="0" x2="0" y2="1"><stop offset="0" stop-color="#3f6cc0"/><stop offset=".35" stop-color="#22396c"/><stop offset="1" stop-color="#141c2e"/></linearGradient>
<filter id="bl" x="-5%" y="-5%" width="110%" height="110%"><feGaussianBlur stdDeviation=".95"/></filter>
<clipPath id="dc"><rect x="189" y="515.200" width="95.800" height="95.800"/></clipPath></defs>
<g clip-path="url(#dc)"><g filter="url(#bl)">
<rect x="185" y="512" width="104" height="104" fill="url(#wd)"/>
<rect x="185" y="512" width="104" height="24" fill="url(#cl)"/>
<path d="M189 527l46-6 50 5" stroke="#5e3218" stroke-width="2.400" fill="none"/><path d="M233 515l6 13" stroke="#5a2e16" stroke-width="2.200"/><path d="M189 520l16 10" stroke="#50280f" stroke-width="1.600"/>
<rect x="203" y="538" width="48" height="12" fill="#2a160d"/>
<rect x="207.600" y="540.700" width="14" height="6.600" fill="#4a76c2"/><rect x="230" y="540.700" width="19" height="6.600" fill="#446eb8"/><path d="M233 547l3-5 3 4 3-5 3 6z" fill="#24365e"/><rect x="223" y="542" width="6" height="4" fill="#8a8a88"/>
<rect x="203.400" y="549.600" width="46.600" height="38" fill="#aaa393"/>
<rect x="207" y="554.700" width="15.600" height="25" fill="url(#gl)"/><rect x="229.200" y="554.700" width="17" height="25" fill="url(#gl)"/>
<rect x="189" y="551.800" width="8.400" height="17.600" fill="#c4d6cf" stroke="#2a1a12" stroke-width="1.200"/>
<rect x="195" y="571" width="3.500" height="3" fill="#cfd8c8"/>
<path d="M189 578h8l4 4v30h-12z" fill="#5a3018"/><rect x="189" y="585" width="9" height="3" fill="#2a1a12"/>
<rect x="241.500" y="570" width="8" height="10" rx="1" fill="#dccca4"/>
<path d="M205.600 592v-7c0-4 3-6 7-6h38c4 0 7.500 2 7.500 6v7z" fill="#3a4039"/>
<path d="M259 581c-1 3-.5 5 0 7s-1 3-.6 4.400c1 2 8 2 10.600 0 1-1.500.4-3 0-4.400s.4-4-0.400-7c-1.600-2-8-2-9.600 0z" fill="#dcb264"/><circle cx="264.500" cy="585.500" r="1.700" fill="#5a3a1a"/><path d="M265.600 582l4.800-15" stroke="#9a6a36" stroke-width="1.700"/>
<path d="M270 611l3-22c.5-3 3-5 5-4l2-14M282 611l-1-24" stroke="#1e120c" stroke-width="3"/><path d="M276.500 590l4.500-22" stroke="#6a3216" stroke-width="1.600"/>
<path d="M186 614v-11c4-5 9-8 16-10l14-5 5-3.500h20l5 3.500 10 4c6 2 11 5 13 10v12z" fill="#e9e9ee"/>
<path d="M222 586l8 8 9-8-1-4h-15z" fill="#b88a78"/>
<ellipse cx="231" cy="574" rx="10.200" ry="12.600" fill="#b98a78"/>
<path d="M220.400 571c-1.400-9 3.600-15 10.600-15s12 6 10.800 15c-1.600-5.600-4.800-8-10.800-8s-9 2.400-10.600 8z" fill="#dedad2"/>
<ellipse cx="226.200" cy="572" rx="3" ry="1.500" fill="#5a3a32"/><ellipse cx="236" cy="572" rx="3" ry="1.500" fill="#5a3a32"/><path d="M231 573v5" stroke="#a07464" stroke-width="1.600"/><path d="M227.500 581.800h7" stroke="#8a5a4e" stroke-width="1.300"/><ellipse cx="231" cy="566" rx="7" ry="2.500" fill="#c89a88"/>
<rect x="185" y="512" width="104" height="104" fill="#140a06" opacity=".1"/></g></g></svg>
<div style="position:absolute;left:207.800px;top:76.600px;width:58px;height:15.800px;background:rgba(90,90,90,.9);border-radius:3px"></div>
<div class="nm" style="left:212.600px;top:77.600px;letter-spacing:.18px">Douglas M.</div>
<!-- Neuhaus video tile -->
<svg style="position:absolute;left:771.200px;top:.500px" width="96" height="95.500" viewBox="771.200 515.500 96 95.500">
<defs><linearGradient id="sky" x1="0" y1="0" x2="0" y2="1"><stop offset="0" stop-color="#3f7fd6"/><stop offset=".4" stop-color="#79abe4"/><stop offset=".6" stop-color="#d9e6f3"/><stop offset="1" stop-color="#e8efe8"/></linearGradient><clipPath id="nc"><rect x="771.200" y="515.500" width="96" height="95.500" rx="1.800"/></clipPath>
<filter id="bl2" x="-5%" y="-5%" width="110%" height="110%"><feGaussianBlur stdDeviation=".6"/></filter></defs>
<g clip-path="url(#nc)"><g filter="url(#bl2)">
<rect x="768" y="512" width="104" height="104" fill="url(#sky)"/>
<ellipse cx="828" cy="532" rx="16" ry="3.500" fill="#dbe8f6" opacity=".9"/><ellipse cx="842" cy="539" rx="9" ry="2.500" fill="#e4eefa" opacity=".85"/><ellipse cx="856" cy="520" rx="10" ry="2.600" fill="#d6e5f5" opacity=".85"/><ellipse cx="822" cy="552" rx="9" ry="3" fill="#e6eff8" opacity=".8"/>
<path d="M768 512h24l6 8 8 22 8 18 7 12 6 6v12h-59z" fill="#203428"/>
<path d="M793 516l4 10-3 6-4-8z" fill="#2a4030"/>
<path d="M853 540l5-9 14-8v70h-19z" fill="#22362a"/>
<rect x="768" y="584.600" width="46" height="32" fill="#5c983a"/><path d="M768 598h30l-4 6h-26z" fill="#467a2e"/>
<rect x="818.700" y="563.500" width="10" height="10.500" fill="#e4dfd0"/>
<g stroke="#d4d8d4" stroke-width="1.050" opacity=".85"><path d="M776.700 514l-4.200 82M782.400 520l-5 74M789.400 515l-5.600 78M795.200 528l-1.200 63M800.600 520l-1.400 71M805 540l-1.400 50M809.500 548l-1.200 41M813.500 555l-.8 33M817 560l-.6 27M820 564l-.4 22M863.500 523l3 60"/></g>
<g fill="#d6423c"><path d="M783.800 530l4.600 8v8l-4.600-9z"/><path d="M772 517l5 4v6l-5-3z"/><path d="M808 538l8 6v4l-8-5z"/><path d="M812 548l6 7v5l-6-7z"/><path d="M863.600 527l3.600 6v7l-3.600-6z"/><path d="M818 558l4 6v3l-4-5z"/><path d="M797 540l3 5v5l-3-5z"/></g>
<path d="M795.200 518l9 13 4 9-4 1-9-14z" fill="#3a9a5a"/><path d="M795.200 518l3 1v6l-3-2z" fill="#d6423c"/><path d="M797 525l10 13" stroke="#f2f2f2" stroke-width="2.400"/><path d="M798 530l9 11" stroke="#d6423c" stroke-width="1.600"/>
<path d="M794 616c0-22 12-38 36-40h42v40z" fill="#3a7b9b"/>
<path d="M833 590c5 4 16 4 23-1l-1 14h-19z" fill="#cfae9f"/>
<ellipse cx="845" cy="567" rx="16" ry="21" fill="#dcc0b2"/>
<path d="M828.600 570c-1.800-15 6-25.500 17-25.500s17.400 10 15.800 21c-3-9-8.400-12.500-15.800-12.500s-14 5-17 17z" fill="#b0a6a0"/>
<ellipse cx="849" cy="553.500" rx="9" ry="5.500" fill="#ecdcd2"/>
<path d="M832 573.500c8 1.200 17 2.200 27 1" stroke="#1e1a1a" stroke-width="2.200" fill="none"/><rect x="834" y="574.500" width="10.500" height="7.500" rx="3" fill="#5a4e4a" stroke="#1e1a1a" stroke-width="1.500"/><rect x="847.500" y="575" width="10.500" height="7.500" rx="3" fill="#5a4e4a" stroke="#1e1a1a" stroke-width="1.500"/>
</g></g></svg>
<div style="position:absolute;left:774px;top:76.700px;width:90px;height:15.200px;background:rgba(44,68,84,.92);border-radius:2.500px"></div>
<div class="nm" style="left:778.600px;top:77.500px;letter-spacing:.1px">Neuhaus, Klaus...</div>

</div>
<div id="bar" class="abs">
<svg style="position:absolute;left:0;top:0" width="997" height="82" viewBox="0 611 997 82" fill="none" stroke="#f2f2f2" stroke-width="1.500" stroke-linecap="round" stroke-linejoin="round">
<rect x="350" y="620" width="50" height="48" rx="4" fill="#282828" stroke="none"/><rect x="406" y="620" width="50" height="48" rx="4" fill="#282828" stroke="none"/><rect x="485" y="620" width="50" height="48" rx="4" fill="#282828" stroke="none"/><rect x="541" y="620" width="50" height="48" rx="4" fill="#282828" stroke="none"/>
<!-- chat -->
<path d="M263 634.600a9.300 9.300 0 1 1-4.600 17.400l-4.200 1.200 1.200-4a9.300 9.300 0 0 1 7.600-14.600z"/><path d="M259.400 642h7.400M259.400 646h5"/>
<circle cx="271.400" cy="635.800" r="3.300" fill="#e81f2b" stroke="none"/>
<!-- people -->
<circle cx="316.400" cy="639" r="3.600"/><circle cx="325" cy="640.400" r="2.600"/><path d="M310 647.600a1.600 1.600 0 0 1 1.600-1.600h9.600a1.600 1.600 0 0 1 1.600 1.600v1.200c0 3-2.600 4.600-6.400 4.600s-6.400-1.600-6.400-4.600z"/><path d="M325 646h2.600a1.600 1.600 0 0 1 1.600 1.600v.6c0 2.600-1.800 4-4.800 3.800"/>
<!-- share -->
<rect x="365.400" y="637" width="18.800" height="13.800" rx="1.600"/><path d="M374.800 647.400v-6.600M372 643.200l2.800-2.800 2.800 2.800"/>
<!-- hand -->
<path d="M427.600 645.600v-6.200a1.300 1.300 0 0 1 2.600 0v-1.800a1.300 1.300 0 0 1 2.600 0v.400a1.300 1.300 0 0 1 2.600 0v1.200a1.300 1.300 0 0 1 2.600 0v7.400c0 4-2.400 6.200-6 6.200-2.800 0-4.400-1.200-5.800-3.400l-2.400-3.800c-.8-1.400.8-2.400 1.800-1.200z" stroke-width="1.400"/><path d="M430.200 639.400v4.600M432.800 638v6M435.400 639.200v4.800" stroke-width="1"/>
<path d="M470.300 624v40" stroke="#4a4a4a" stroke-width="1"/>
<!-- camera off -->
<rect x="500.600" y="637" width="13.600" height="13.600" rx="2.400" fill="#f2f2f2" stroke="none"/><path d="M515.200 642l5-3.600v10.800l-5-3.600z" fill="#f2f2f2" stroke-width="1"/><path d="M501.600 634.600l17.400 18.600" stroke="#292929" stroke-width="3.400"/><path d="M501.600 634.600l17.400 18.600" stroke-width="1.300"/>
<!-- mic off -->
<rect x="563.400" y="635" width="6" height="11" rx="3" fill="#f2f2f2" stroke="none"/><path d="M560.600 643.600a5.800 5.800 0 0 0 11.600 0M566.400 649.600v3.400"/><path d="M557.600 634.600l17 18.600" stroke="#292929" stroke-width="3.400"/><path d="M557.600 634.600l17 18.600" stroke-width="1.300"/>
<!-- speaker -->
<path d="M612.400 640.600h3.400l5.600-4.800v16.400l-5.600-4.800h-3.400z" fill="#f2f2f2" stroke-width="1.200"/><path d="M625.400 640.200a5.400 5.400 0 0 1 0 7.600M628.600 637.200a9.400 9.400 0 0 1 0 13.600"/>
<!-- more -->
<g fill="#f2f2f2" stroke="none"><circle cx="671.200" cy="644" r="2"/><circle cx="678" cy="644" r="2"/><circle cx="684.800" cy="644" r="2"/></g>
<!-- hang up -->
<rect x="708.500" y="618.700" width="50.700" height="50.300" rx="5" fill="#97343f" stroke="none"/>
<path d="M723.600 645.400c0-3.400 5-5.600 10.700-5.600s10.700 2.200 10.700 5.600v1.400c0 .8-.6 1.200-1.400 1l-3.800-1c-.6-.2-1-.6-1-1.200v-1.800c-1.400-.6-3-.8-4.500-.8s-3.100.2-4.500.8v1.800c0 .6-.4 1-1 1.200l-3.800 1c-.8.200-1.400-.2-1.400-1z" fill="#fff" stroke="none"/>
</svg>
</div>
<!-- floating name tooltip -->
<div class="abs" style="left:8.700px;top:479px;width:140.300px;height:26.700px;background:rgba(41,41,41,.93);border-radius:3.500px"></div>
<div class="abs gs" style="left:17px;top:486.200px;font-size:9.400px;line-height:14px;color:#f0f0f0;white-space:nowrap;letter-spacing:.05px">Neuhaus, Klaus (ETB1)</div>
<svg class="abs" style="left:127.400px;top:489.900px" width="12" height="6" viewBox="0 0 12 6" fill="#f0f0f0"><circle cx="2" cy="3" r="1.150"/><circle cx="6" cy="3" r="1.150"/><circle cx="10" cy="3" r="1.150"/></svg>

</body></html>
